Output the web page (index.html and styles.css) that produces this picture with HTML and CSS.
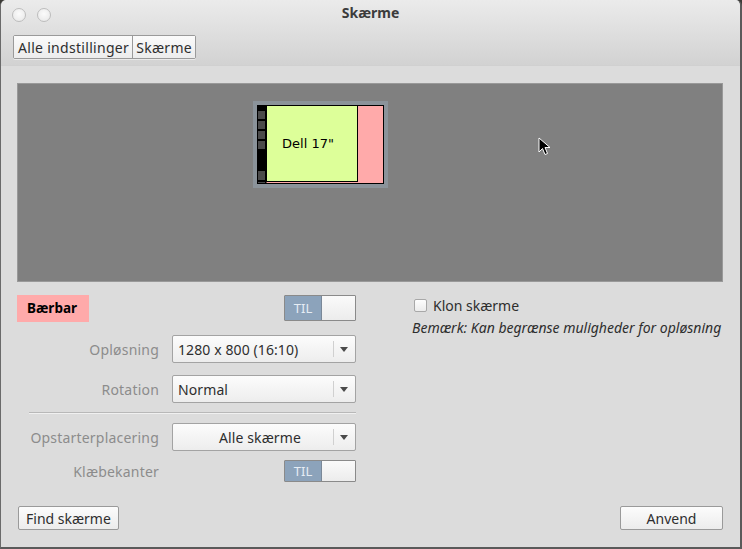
FILE: index.html
```html
<!DOCTYPE html>
<html>
<head>
<meta charset="utf-8">
<link rel="stylesheet" href="styles.css">
</head>
<body>
<div class="window">
  <div class="header">
    <div class="titlebar">
      <div class="winbtns"><span class="wb"></span><span class="wb"></span></div>
      <div class="title">Skærme</div>
    </div>
    <div class="toolbar">
      <div class="crumbs">
        <button class="crumb">Alle indstillinger</button><button class="crumb">Skærme</button>
      </div>
    </div>
  </div>
  <div class="content">
    <div class="canvas">
      <svg class="monitor" width="135" height="87" viewBox="0 0 135 87">
        <rect x="0" y="0" width="135" height="87" fill="#8b939a"/>
        <rect x="4.5" y="4.5" width="126" height="78" fill="#ffaaaa" stroke="#000" stroke-width="1"/>
        <rect x="4" y="4" width="9.5" height="79" fill="#000"/>
        <rect x="5" y="10" width="7" height="8" fill="#4a4a4a"/>
        <rect x="5" y="20" width="7" height="8" fill="#4a4a4a"/>
        <rect x="5" y="30" width="7" height="8" fill="#4a4a4a"/>
        <rect x="5" y="40" width="7" height="8" fill="#4a4a4a"/>
        <rect x="5" y="70" width="7" height="9" fill="#4a4a4a"/>
        <rect x="5" y="81" width="7" height="1" fill="#4a4a4a"/>
        <rect x="13.5" y="4.5" width="91" height="76" fill="#ddff99" stroke="#000" stroke-width="1"/>
        <text x="55" y="47" text-anchor="middle" class="mon-label">Dell 17"</text>
      </svg>
      <svg class="cursor" width="14" height="20" viewBox="0 0 14 20">
        <path d="M1 1 L1 15 L4.5 11.5 L7 17.5 L9.5 16.5 L7 10.5 L12 10.5 Z" fill="#000" stroke="#fff" stroke-width="1" stroke-linejoin="round"/>
      </svg>
    </div>
    <div class="lower">
      <div class="left">
        <div class="namerow">
          <span class="name">Bærbar</span>
          <div class="toggle"><span class="on">TIL</span><span class="off"></span></div>
        </div>
        <div class="form">
          <label class="lbl">Opløsning</label>
          <div class="combo"><span class="ctext">1280 x 800 (16:10)</span><span class="carrow"></span></div>
          <label class="lbl">Rotation</label>
          <div class="combo"><span class="ctext">Normal</span><span class="carrow"></span></div>
        </div>
        <div class="sep"></div>
        <div class="form form2">
          <label class="lbl">Opstarterplacering</label>
          <div class="combo"><span class="ctext center">Alle skærme</span><span class="carrow"></span></div>
          <label class="lbl">Klæbekanter</label>
          <div class="tcell"><div class="toggle small"><span class="on">TIL</span><span class="off"></span></div></div>
        </div>
      </div>
      <div class="right">
        <label class="check"><span class="box"></span>Klon skærme</label>
        <div class="note">Bemærk: Kan begrænse muligheder for opløsning</div>
      </div>
    </div>
    <div class="footer">
      <button class="btn find">Find skærme</button>
      <button class="btn apply">Anvend</button>
    </div>
  </div>
</div>
</body>
</html>
```
FILE: styles.css
```css
html, body {
  margin: 0;
  padding: 0;
  background: #3c3b37;
  width: 742px;
  height: 549px;
  overflow: hidden;
}
body {
  font-family: "Noto Sans", "DejaVu Sans", sans-serif;
  font-size: 14px;
  color: #3c3c3c;
}
.window {
  width: 742px;
  height: 549px;
  box-sizing: border-box;
  border-radius: 6px 6px 0 0;
  background: #dcdcdc;
  border-left: 1px solid #6a6a6a;
  border-right: 2px solid #5a5a5a;
  border-bottom: 2px solid #5a5a5a;
  display: flex;
  flex-direction: column;
  overflow: hidden;
}
.header {
  height: 66px;
  background: linear-gradient(#ebebeb, #d2d2d2);
  border-bottom: 1px solid #d0d0d0;
  box-sizing: border-box;
}
.titlebar {
  height: 30px;
  display: flex;
  align-items: center;
  position: relative;
}
.winbtns {
  display: flex;
  gap: 11px;
  padding-left: 11px;
}
.wb {
  width: 12px;
  height: 12px;
  border-radius: 50%;
  background: radial-gradient(circle at 50% 40%, #fbfbfb, #e6e6e6);
  border: 1px solid #bdbdbd;
}
.title {
  position: absolute;
  left: 0;
  right: 0;
  top: 3px;
  text-align: center;
  font-weight: bold;
  font-size: 14px;
  color: #3c3c3c;
}
.toolbar {
  padding: 5px 0 0 12px;
}
.crumbs {
  display: inline-flex;
  border: 1px solid #9a9a9a;
  border-radius: 2px;
  box-shadow: 0 1px 0 rgba(255,255,255,0.5);
}
.crumb {
  font: inherit;
  font-size: 14px;
  color: #2e2e2e;
  height: 22px;
  padding: 0 3px 0 4px;
  margin: 0;
  border: 0;
  background: linear-gradient(#fbfbfb, #ececec);
  letter-spacing: 0.3px;
}
.crumb + .crumb {
  border-left: 1px solid #9a9a9a;
  padding: 0 3px;
}
.content {
  flex: 1;
  padding: 17px 17px 0 16px;
  display: flex;
  flex-direction: column;
}
.canvas {
  position: relative;
  height: 199px;
  background: #808080;
  border: 1px solid #999;
  box-sizing: border-box;
}
.monitor {
  position: absolute;
  left: 235px;
  top: 17px;
}
.mon-label {
  font-family: "DejaVu Sans", sans-serif;
  font-size: 13px;
  fill: #000;
}
.cursor {
  position: absolute;
  left: 520px;
  top: 53px;
}
.lower {
  display: flex;
  margin-top: 12px;
}
.left {
  width: 339px;
  flex: none;
}
.namerow {
  display: flex;
  justify-content: space-between;
  align-items: center;
  height: 28px;
}
.name {
  background: #ffaaaa;
  color: #000;
  font-weight: bold;
  font-size: 13.5px;
  width: 72px;
  height: 27px;
  line-height: 27px;
  box-sizing: border-box;
  padding-left: 10px;
}
.toggle {
  display: flex;
  width: 72px;
  height: 26px;
  border: 1px solid #8a8a8a;
  box-sizing: border-box;
  border-radius: 1px;
  overflow: hidden;
}
.toggle .on {
  width: 36px;
  background: #8ca3bb;
  color: #e6edf4;
  font-size: 13px;
  display: flex;
  align-items: center;
  justify-content: center;
  border-right: 1px solid #7a8898;
}
.toggle .off {
  flex: 1;
  background: linear-gradient(#fafafa, #ececec);
}
.toggle.small {
  height: 22px;
}
.form {
  display: grid;
  grid-template-columns: 142px 184px;
  column-gap: 13px;
  row-gap: 12px;
  align-items: center;
  margin-top: 13px;
}
.form2 {
  margin-top: 10px;
  row-gap: 9px;
}
.lbl {
  text-align: right;
  color: #8c8c8c;
  font-size: 14px;
  letter-spacing: 0.2px;
}
.combo {
  height: 28px;
  box-sizing: border-box;
  border: 1px solid #a3a3a3;
  border-radius: 2px;
  background: linear-gradient(#fcfcfc, #ededed);
  display: flex;
  align-items: center;
  position: relative;
}
.ctext {
  flex: 1;
  padding-left: 5px;
  color: #2e2e2e;
  font-size: 14px;
  letter-spacing: 0.1px;
}
.ctext.center {
  text-align: center;
  padding-left: 14px;
}
.carrow {
  width: 21px;
  height: 16px;
  border-left: 1px solid #d0d0d0;
  position: relative;
}
.carrow::after {
  content: "";
  position: absolute;
  left: 6px;
  top: 6px;
  border-left: 4.5px solid transparent;
  border-right: 4.5px solid transparent;
  border-top: 5px solid #4a4a4a;
}
.tcell {
  display: flex;
  justify-content: flex-end;
}
.sep {
  height: 1px;
  background: #b8b8b8;
  box-shadow: 0 1px 0 #f0f0f0;
  margin: 9px 0 0 12px;
  width: 327px;
}
.right {
  padding-left: 56px;
  padding-top: 2px;
  white-space: nowrap;
}
.check {
  display: flex;
  align-items: center;
  gap: 6px;
  margin-left: 2px;
  font-size: 14px;
  color: #2e2e2e;
}
.box {
  width: 13px;
  height: 13px;
  box-sizing: border-box;
  border: 1px solid #a8a8a8;
  border-radius: 2px;
  background: linear-gradient(#fdfdfd, #ececec);
}
.note {
  font-style: italic;
  font-size: 14px;
  color: #2e2e2e;
  margin-top: 3px;
  white-space: nowrap;
}
.footer {
  display: flex;
  justify-content: space-between;
  margin-top: auto;
  margin-bottom: 17px;
  padding-left: 1px;
}
.btn {
  font: inherit;
  font-size: 14px;
  color: #2e2e2e;
  height: 24px;
  border: 1px solid #9a9a9a;
  border-radius: 2px;
  background: linear-gradient(#fcfcfc, #ececec);
  padding: 0 7px;
}
.apply {
  width: 103px;
}
```
